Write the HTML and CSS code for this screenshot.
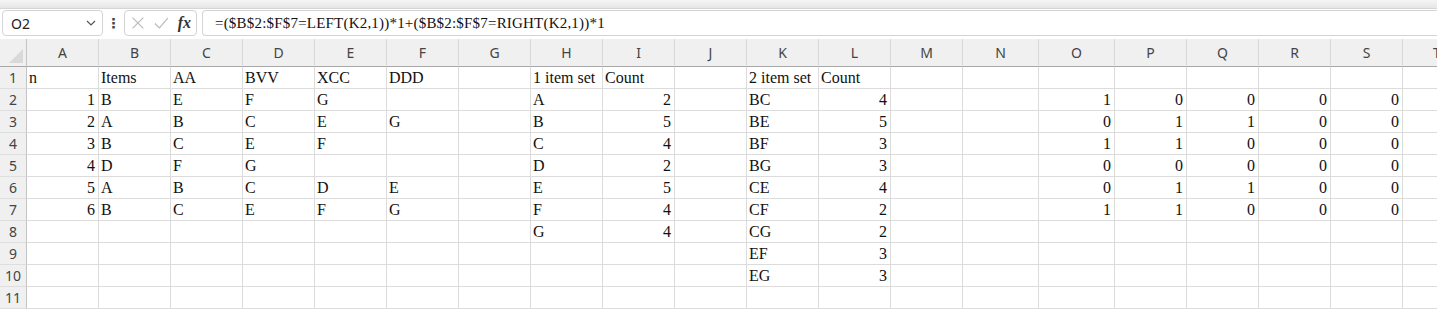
FILE: index.html
```html
<!DOCTYPE html>
<html lang="en">
<head>
    <meta charset="UTF-8">
    <meta name="viewport" content="width=device-width, initial-scale=1.0">
    <title>Sheet1</title>
    <link rel="stylesheet" href="styles.css">
</head>
<body>

    <div class="ribbon-edge"></div>

    <div class="formula-bar">
        <div class="name-box">
            <span>O2</span>
            <svg class="chevron" width="10" height="6" viewBox="0 0 10 6"><path d="M1 1l4 4 4-4" fill="none" stroke="#555" stroke-width="1.2"/></svg>
        </div>
        <div class="grip">&#8942;</div>
        <div class="fx-box">
            <svg width="14" height="14" viewBox="0 0 14 14"><path d="M1.5 1.5l11 11M12.5 1.5l-11 11" stroke="#b8b8b8" stroke-width="1.1"/></svg>
            <svg width="15" height="12" viewBox="0 0 15 12"><path d="M1 6.5l4.5 4.5L14 1" fill="none" stroke="#b8b8b8" stroke-width="1.1"/></svg>
            <span class="fx">fx</span>
        </div>
        <div class="formula-input">=($B$2:$F$7=LEFT(K2,1))*1+($B$2:$F$7=RIGHT(K2,1))*1</div>
    </div>

    <div class="sheet-wrap">
    <table class="sheet">
        <colgroup>
            <col class="c-row">
            <col><col><col><col><col><col><col><col><col><col><col><col><col>
            <col class="c-wide"><col class="c-wide">
            <col><col><col><col><col>
        </colgroup>
        <thead>
            <tr>
                <th class="corner"><div class="tri"></div></th>
                <th>A</th><th>B</th><th>C</th><th>D</th><th>E</th><th>F</th><th>G</th>
                <th>H</th><th>I</th><th>J</th><th>K</th><th>L</th><th>M</th><th>N</th>
                <th>O</th><th>P</th><th>Q</th><th>R</th><th>S</th><th class="cut">T</th>
            </tr>
        </thead>
        <tbody>
            <tr>
                <th>1</th>
                <td>n</td><td>Items</td><td>AA</td><td>BVV</td><td>XCC</td><td>DDD</td><td></td>
                <td>1 item set</td><td>Count</td><td></td><td>2 item set</td><td>Count</td><td></td><td></td>
                <td></td><td></td><td></td><td></td><td></td><td></td>
            </tr>
            <tr>
                <th>2</th>
                <td class="num">1</td><td>B</td><td>E</td><td>F</td><td>G</td><td></td><td></td>
                <td>A</td><td class="num">2</td><td></td><td>BC</td><td class="num">4</td><td></td><td></td>
                <td class="num">1</td><td class="num">0</td><td class="num">0</td><td class="num">0</td><td class="num">0</td><td></td>
            </tr>
            <tr>
                <th>3</th>
                <td class="num">2</td><td>A</td><td>B</td><td>C</td><td>E</td><td>G</td><td></td>
                <td>B</td><td class="num">5</td><td></td><td>BE</td><td class="num">5</td><td></td><td></td>
                <td class="num">0</td><td class="num">1</td><td class="num">1</td><td class="num">0</td><td class="num">0</td><td></td>
            </tr>
            <tr>
                <th>4</th>
                <td class="num">3</td><td>B</td><td>C</td><td>E</td><td>F</td><td></td><td></td>
                <td>C</td><td class="num">4</td><td></td><td>BF</td><td class="num">3</td><td></td><td></td>
                <td class="num">1</td><td class="num">1</td><td class="num">0</td><td class="num">0</td><td class="num">0</td><td></td>
            </tr>
            <tr>
                <th>5</th>
                <td class="num">4</td><td>D</td><td>F</td><td>G</td><td></td><td></td><td></td>
                <td>D</td><td class="num">2</td><td></td><td>BG</td><td class="num">3</td><td></td><td></td>
                <td class="num">0</td><td class="num">0</td><td class="num">0</td><td class="num">0</td><td class="num">0</td><td></td>
            </tr>
            <tr>
                <th>6</th>
                <td class="num">5</td><td>A</td><td>B</td><td>C</td><td>D</td><td>E</td><td></td>
                <td>E</td><td class="num">5</td><td></td><td>CE</td><td class="num">4</td><td></td><td></td>
                <td class="num">0</td><td class="num">1</td><td class="num">1</td><td class="num">0</td><td class="num">0</td><td></td>
            </tr>
            <tr>
                <th>7</th>
                <td class="num">6</td><td>B</td><td>C</td><td>E</td><td>F</td><td>G</td><td></td>
                <td>F</td><td class="num">4</td><td></td><td>CF</td><td class="num">2</td><td></td><td></td>
                <td class="num">1</td><td class="num">1</td><td class="num">0</td><td class="num">0</td><td class="num">0</td><td></td>
            </tr>
            <tr>
                <th>8</th>
                <td></td><td></td><td></td><td></td><td></td><td></td><td></td>
                <td>G</td><td class="num">4</td><td></td><td>CG</td><td class="num">2</td><td></td><td></td>
                <td></td><td></td><td></td><td></td><td></td><td></td>
            </tr>
            <tr>
                <th>9</th>
                <td></td><td></td><td></td><td></td><td></td><td></td><td></td>
                <td></td><td></td><td></td><td>EF</td><td class="num">3</td><td></td><td></td>
                <td></td><td></td><td></td><td></td><td></td><td></td>
            </tr>
            <tr>
                <th>10</th>
                <td></td><td></td><td></td><td></td><td></td><td></td><td></td>
                <td></td><td></td><td></td><td>EG</td><td class="num">3</td><td></td><td></td>
                <td></td><td></td><td></td><td></td><td></td><td></td>
            </tr>
            <tr>
                <th>11</th>
                <td></td><td></td><td></td><td></td><td></td><td></td><td></td>
                <td></td><td></td><td></td><td></td><td></td><td></td><td></td>
                <td></td><td></td><td></td><td></td><td></td><td></td>
            </tr>
        </tbody>
    </table>
    </div>

</body>
</html>
```

FILE: styles.css
```css
body {
    margin: 0;
    background-color: white;
    overflow: hidden;
    font-family: "Liberation Serif", serif;
}
.ribbon-edge {
    height: 8px;
    background: linear-gradient(#f5f5f5, #e6e6e6);
    border-bottom: 1px solid #d6d6d6;
}
.formula-bar {
    display: flex;
    align-items: center;
    height: 26px;
    margin-top: 1px;
    padding-left: 2px;
}
.name-box {
    display: flex;
    align-items: center;
    justify-content: space-between;
    box-sizing: border-box;
    width: 101px;
    height: 26px;
    padding: 0 6px 0 8px;
    border: 1px solid #d4d4d4;
    border-radius: 4px;
    font-family: "Noto Sans", sans-serif;
    font-size: 14px;
    color: #222;
}
.grip {
    width: 21px;
    text-align: center;
    font-family: "DejaVu Sans", sans-serif;
    font-size: 14px;
    font-weight: bold;
    color: #444;
}
.fx-box {
    display: flex;
    align-items: center;
    gap: 9px;
    box-sizing: border-box;
    width: 73px;
    height: 26px;
    padding: 0 5px 0 6px;
    border: 1px solid #d4d4d4;
    border-radius: 4px;
}
.fx {
    font-family: "Liberation Serif", serif;
    font-style: italic;
    font-weight: bold;
    font-size: 16px;
    color: #333;
}
.formula-input {
    flex: 1;
    box-sizing: border-box;
    height: 26px;
    margin-left: 5px;
    padding: 3px 0 0 12px;
    border: 1px solid #d4d4d4;
    border-right: none;
    border-radius: 4px 0 0 4px;
    font-size: 15px;
    letter-spacing: 0.2px;
    line-height: 18px;
    color: #111;
    white-space: nowrap;
}
.sheet-wrap {
    width: 1437px;
    overflow: hidden;
}
.sheet {
    margin-top: 3px;
    table-layout: fixed;
    border-collapse: separate;
    border-spacing: 0;
    width: 1475px;
    font-size: 16px;
    color: #111;
}
.sheet col {
    width: 72px;
}
.sheet col.c-row {
    width: 27px;
}
.sheet col.c-wide {
    width: 76px;
}
.sheet thead th {
    box-sizing: border-box;
    height: 28px;
    padding: 0;
    background-color: #f0f0f0;
    border-right: 1px solid #d8d8d8;
    border-bottom: 1px solid #a8a8a8;
    font-family: "Noto Sans", sans-serif;
    font-weight: normal;
    font-size: 14px;
    color: #444;
    text-align: center;
}
.sheet thead th.cut {
    text-align: left;
    padding-left: 30px;
}
.sheet thead th.corner {
    position: relative;
    border-right: 1px solid #c4c4c4;
}
.tri {
    position: absolute;
    right: 3px;
    bottom: 3px;
    width: 0;
    height: 0;
    border-left: 14px solid transparent;
    border-bottom: 14px solid #d9d9d9;
}
.sheet tbody th {
    box-sizing: border-box;
    height: 22px;
    padding: 0;
    background-color: #f0f0f0;
    border-right: 1px solid #c4c4c4;
    border-bottom: 1px solid #dedede;
    font-family: "Noto Sans", sans-serif;
    font-weight: normal;
    font-size: 14px;
    color: #444;
    text-align: center;
}
.sheet td {
    box-sizing: border-box;
    height: 22px;
    padding: 0 2px 1px 2px;
    border-right: 1px solid #dcdcdc;
    border-bottom: 1px solid #dcdcdc;
    vertical-align: bottom;
    white-space: nowrap;
    overflow: hidden;
    line-height: 18px;
}
.sheet td.num {
    text-align: right;
    padding-right: 3px;
}
```
